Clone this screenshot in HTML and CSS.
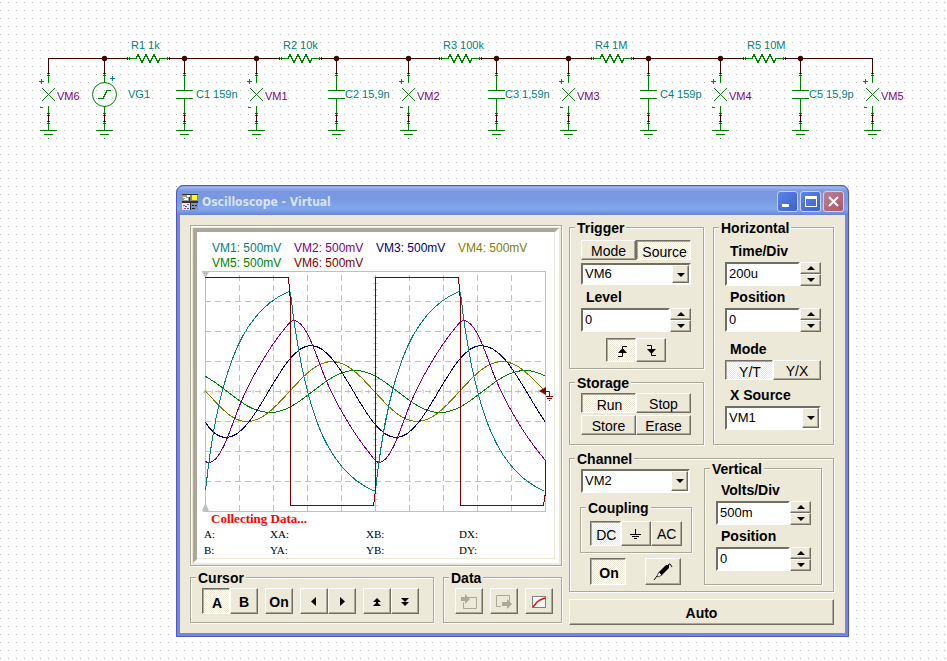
FILE: index.html
```html
<!DOCTYPE html>
<html lang="en">
<head>
    <meta charset="UTF-8">
    <meta name="viewport" content="width=device-width, initial-scale=1.0">
    <title>Oscilloscope - Virtual</title>
    <link rel="stylesheet" href="styles.css">
</head>
<body>

    <!-- circuit -->
    <svg class="schematic" width="947" height="185" viewBox="0 0 947 185">
        <defs>
            <g id="pin">
                <rect class="pin" x="-1" y="-1" width="1" height="1"/><rect class="pin" x="1" y="-1" width="1" height="1"/>
                <rect class="pin" x="-1" y="1" width="1" height="1"/><rect class="pin" x="1" y="1" width="1" height="1"/>
            </g>
            <g id="gnd">
                <path class="wire" d="M.5 114v8"/>
                <path class="part" d="M.5 122v8M-8 130.5h17M-4 134.5h9M0 138.5h1"/>
                <use href="#pin" y="114"/><use href="#pin" y="122"/>
            </g>
            <g id="meter">
                <path class="wire" d="M.5 58v16"/>
                <path class="part" d="M.5 74v9M.5 106v8M-6 88l13 13M7 88l-13 13"/>
                <path class="mark" d="M-9 81.5h5M-6.500 79v5M-8 107.500h3"/>
                <use href="#pin" y="74"/><use href="#gnd"/>
            </g>
            <g id="cap">
                <path class="wire" d="M.5 58v16"/>
                <path class="part" d="M.5 74v16M-8 90.500h17M-8 98.500h17M.5 98v16"/>
                <use href="#pin" y="74"/><use href="#gnd"/>
            </g>
            <g id="res">
                <path class="blank" d="M0 58.500h40"/>
                <path class="part" d="M0 58.500h8l2 -4l4 8l4 -8l4 8l4 -8l4 8l2 -4h8"/>
                <use href="#pin" y="58"/><use href="#pin" x="40" y="58"/>
            </g>
        </defs>

        <path class="wire" d="M48 58.500h825"/>
        <use href="#res" x="128"/><use href="#res" x="280"/><use href="#res" x="440"/>
        <use href="#res" x="592"/><use href="#res" x="744"/>
        <use href="#meter" x="48"/><use href="#meter" x="256"/><use href="#meter" x="408"/>
        <use href="#meter" x="568"/><use href="#meter" x="720"/><use href="#meter" x="872"/>
        <use href="#cap" x="184"/><use href="#cap" x="336"/><use href="#cap" x="496"/>
        <use href="#cap" x="648"/><use href="#cap" x="800"/>

        <path class="wire" d="M104.500 58v16"/>
        <path class="part" d="M104.500 74v9M104.500 106v8M98 98.500h5l4 -8h4"/>
        <circle class="ring" cx="104.500" cy="94.500" r="12"/>
        <path class="mark" d="M110 78.500h5M112.500 76v5"/>
        <use href="#pin" x="104" y="74"/><use href="#gnd" x="104"/>

        <g class="node">
            <circle cx="104.500" cy="58.500" r="2.700"/><circle cx="184.500" cy="58.500" r="2.700"/>
            <circle cx="256.500" cy="58.500" r="2.700"/><circle cx="336.500" cy="58.500" r="2.700"/>
            <circle cx="408.500" cy="58.500" r="2.700"/><circle cx="496.500" cy="58.500" r="2.700"/>
            <circle cx="568.500" cy="58.500" r="2.700"/><circle cx="648.500" cy="58.500" r="2.700"/>
            <circle cx="720.500" cy="58.500" r="2.700"/><circle cx="800.500" cy="58.500" r="2.700"/>
        </g>

        <g class="value">
            <text x="131" y="49">R1 1k</text>
            <text x="283" y="49">R2 10k</text>
            <text x="443" y="49">R3 100k</text>
            <text x="595" y="49">R4 1M</text>
            <text x="747" y="49">R5 10M</text>
            <text x="128" y="98">VG1</text>
            <text x="196" y="98">C1 159n</text>
            <text x="345" y="98">C2 15,9n</text>
            <text x="505" y="98">C3 1,59n</text>
            <text x="660" y="98">C4 159p</text>
            <text x="809" y="98">C5 15,9p</text>
        </g>
        <g class="meter-name">
            <text x="57" y="100">VM6</text>
            <text x="265" y="100">VM1</text>
            <text x="417" y="100">VM2</text>
            <text x="577" y="100">VM3</text>
            <text x="729" y="100">VM4</text>
            <text x="881" y="100">VM5</text>
        </g>
    </svg>

    <div class="window">
        <div class="titlebar">
            <svg class="app-icon" width="16" height="16" viewBox="0 0 16 16" shape-rendering="crispEdges">
                <rect width="16" height="16" fill="#333"/>
                <rect x="0" y="1" width="7" height="6" fill="#9a9a90"/>
                <path d="M1 3h2v1h2v1h-3M5 1h2v1h-2" stroke="#fff" fill="none"/>
                <rect x="8" y="1" width="8" height="6" fill="#888"/>
                <rect x="10" y="1" width="5" height="5" fill="#ff0"/>
                <rect x="0" y="9" width="8" height="7" fill="#f0e4f8"/>
                <path d="M1 11.500h2M5 10.500h2M2 14.500h2" stroke="#c040c0" fill="none"/>
                <path d="M3 12.500h2M5 14.500h2" stroke="#2060c0" fill="none"/>
                <rect x="9" y="9" width="7" height="7" fill="#8090b0"/>
                <path d="M10 11.500h2M13 11.500h2M10 14.500h3" stroke="#223" fill="none"/>
            </svg>
            <h1>Oscilloscope - Virtual</h1>
            <button class="caption" aria-label="Minimize">
                <svg width="19" height="19" viewBox="0 0 19 19"><path d="M4 12h7v3h-7z" fill="#fff"/></svg>
            </button>
            <button class="caption" aria-label="Maximize">
                <svg width="19" height="19" viewBox="0 0 19 19"><path d="M4 4h12v11h-12zM5 7v7h10v-7z" fill="#fff" fill-rule="evenodd"/></svg>
            </button>
            <button class="caption close" aria-label="Close">
                <svg width="19" height="19" viewBox="0 0 19 19"><path d="M5 5l9 9M14 5l-9 9" stroke="#fff" stroke-width="2"/></svg>
            </button>
        </div>

        <div class="client">
            <div class="left">
                <div class="screen">
                    <div class="display">
                        <div class="channels">
                            <span class="vm1">VM1: 500mV</span>
                            <span class="vm2">VM2: 500mV</span>
                            <span class="vm3">VM3: 500mV</span>
                            <span class="vm4">VM4: 500mV</span>
                            <span class="vm5">VM5: 500mV</span>
                            <span class="vm6">VM6: 500mV</span>
                        </div>
                        <svg class="plot" viewBox="197 271 358 241">
                            <path class="grid" d="M239.500 275v236M273.500 275v236M307.500 275v236M341.500 275v236M409.500 275v236M443.500 275v236M477.500 275v236M511.500 275v236"/>
                            <path class="grid" d="M205 301.500h340M205 331.500h340M205 361.500h340M205 391.500h340M205 421.500h340M205 451.500h340M205 481.500h340"/>
                            <path class="ticks" d="M205 391.500h340" stroke-dasharray="1 5.800"/>
                            <path class="ticks" d="M375.500 277v234" stroke-dasharray="1 5"/>
                            <path class="edge" d="M202 271.500h343.500v240h-343M205.500 271v240M375.500 275v236"/>
                            <path class="flag" d="M202 272h7l-3 5h-1zM202 511l3 -7h1l3 7zM203 393l2 -4h1l2 4z"/>

                            <path class="trace vm5" d="M205.500 376.500C229 389 245 412.500 270 412.500C301 412.500 324 370.500 355 370.500S409 412.500 440 412.500S494 370.500 525 370.500Q535 370.500 545 376"/>
                            <path class="trace vm4" d="M205.500 391.500C221 407 231 421.500 247 421.500C278 421.500 301 361.500 332 361.500S386 421.500 417 421.500S471 361.500 502 361.500C518 361.500 531 377 545 391"/>
                            <path class="trace vm3" d="M205.500 422.500Q215 437.500 226 437.500C257 437.500 280 345.500 311 345.500S365 437.500 396 437.500S450 345.500 481 345.500C506 345.500 523 390 545 421.500"/>
                            <path class="trace vm2" d="M205.500 461.500Q207 462.500 209 462.500C219 462 227 440 237 412C248 383 267 350 286 327C289 323 291 320.500 294 320.500C304 321 312 342 322 370C333 399 352 432 371 455C374 459 376 462.500 379 462.500C389 462 397 440 407 412C418 383 437 350 456 327C459 323 461 320.500 464 320.500C474 321 482 342 492 370C503 399 522 432 541 455L545 460"/>
                            <path class="trace vm1" d="M205.500 490.500C211 440 218 398 232 360C246 322 266 301 289 291.500L290.500 293C296 342 303 384 317 422C331 460 351 481 374 491L375.500 490C381 440 388 398 402 360C416 322 436 301 459 291.500L460.500 293C466 342 473 384 487 422C501 460 521 481 544 491"/>
                            <path class="trace vm6" d="M205 277.500h83.500l2 25v203h83l2 -15v-213h83l2 25v203h83l1.500 -10v-36"/>

                            <path class="marker-fill" d="M539 391l7 -4v8z"/>
                            <path class="marker" d="M545 391.500h4.500v5M546 396.500h7M547 398.500h5M549 400.500h1"/>
                        </svg>
                        <p class="status">Collecting Data...</p>
                        <div class="readout">
                            <span>A:</span><span>XA:</span><span>XB:</span><span>DX:</span>
                            <span>B:</span><span>YA:</span><span>YB:</span><span>DY:</span>
                        </div>
                    </div>
                </div>

                <div class="bottom-row">
                    <fieldset class="cursor">
                        <legend>Cursor</legend>
                        <div class="tools">
                            <button class="btn bold pressed">A</button>
                            <button class="btn bold">B</button>
                        </div>
                        <div class="tools">
                            <button class="btn bold">On</button>
                        </div>
                        <div class="tools">
                            <button class="btn" aria-label="Left"><svg width="10" height="11"><path d="M7 1v9l-5 -4.500z"/></svg></button>
                            <button class="btn" aria-label="Right"><svg width="10" height="11"><path d="M3 1v9l5 -4.500z"/></svg></button>
                        </div>
                        <div class="tools">
                            <button class="btn" aria-label="Up"><svg width="10" height="10"><path d="M1 5l4 -4l4 4zM4 4h2v5h-2zM1 9l4 -4l4 4z"/></svg></button>
                            <button class="btn" aria-label="Down"><svg width="10" height="10"><path d="M1 1h8l-4 4zM1 5h8l-4 4z"/></svg></button>
                        </div>
                    </fieldset>
                    <fieldset class="data">
                        <legend>Data</legend>
                        <button class="btn" aria-label="Import data">
                            <svg width="18" height="16" viewBox="0 0 18 16"><path d="M3 3.500h13.500v11h-13v-6" fill="none" stroke="#aca899"/><path d="M1 3h4v-3l5 5l-5 5v-3h-4z" fill="#aca899"/></svg>
                        </button>
                        <button class="btn" aria-label="Export data">
                            <svg width="18" height="16" viewBox="0 0 18 16"><path d="M6 12.500h-4.500v-11h13v6" fill="none" stroke="#aca899"/><path d="M7 8h5v-3l5 5l-5 5v-3h-5z" fill="#aca899"/></svg>
                        </button>
                        <button class="btn" aria-label="Show curves">
                            <svg width="16" height="14" viewBox="0 0 16 14"><rect x="1.500" y="1.500" width="13" height="11" fill="#fff" stroke="#808080"/><path d="M2 12l4 -5l3 -2l5 -2" fill="none" stroke="red" stroke-width="1.500"/></svg>
                        </button>
                    </fieldset>
                </div>
            </div>

            <div class="right">
                <div class="top-panels">
                    <div class="stack">
                        <fieldset class="trigger">
                            <legend>Trigger</legend>
                            <div class="pair">
                                <button class="btn">Mode</button>
                                <button class="btn pressed">Source</button>
                            </div>
                            <div class="combo">
                                <select aria-label="Trigger source"><option>VM6</option></select>
                                <i></i>
                            </div>
                            <label for="level">Level</label>
                            <div class="spin">
                                <input type="text" id="level" value="0">
                                <button class="up" aria-label="Increase"></button>
                                <button class="down" aria-label="Decrease"></button>
                            </div>
                            <div class="slope">
                                <button class="btn pressed" aria-label="Rising edge">
                                    <svg width="11" height="13" viewBox="0 0 11 13"><path d="M1 11.500h4.500v-10h4.500" fill="none" stroke="#000"/><path d="M1 8l4.500 -5l4.500 5z"/></svg>
                                </button>
                                <button class="btn" aria-label="Falling edge">
                                    <svg width="11" height="13" viewBox="0 0 11 13"><path d="M1 1.500h4.500v10h4.500" fill="none" stroke="#000"/><path d="M1 5l4.500 5l4.500 -5z"/></svg>
                                </button>
                            </div>
                        </fieldset>

                        <fieldset class="storage">
                            <legend>Storage</legend>
                            <button class="btn pressed">Run</button>
                            <button class="btn">Stop</button>
                            <button class="btn">Store</button>
                            <button class="btn">Erase</button>
                        </fieldset>
                    </div>

                    <fieldset class="horizontal">
                        <legend>Horizontal</legend>
                        <label for="timediv">Time/Div</label>
                        <div class="spin">
                            <input type="text" id="timediv" value="200u">
                            <button class="up" aria-label="Increase"></button>
                            <button class="down" aria-label="Decrease"></button>
                        </div>
                        <label for="hpos">Position</label>
                        <div class="spin">
                            <input type="text" id="hpos" value="0">
                            <button class="up" aria-label="Increase"></button>
                            <button class="down" aria-label="Decrease"></button>
                        </div>
                        <div class="label mode">Mode</div>
                        <div class="pair">
                            <button class="btn pressed">Y/T</button>
                            <button class="btn">Y/X</button>
                        </div>
                        <label class="source" for="xsource">X Source</label>
                        <div class="combo tall">
                            <select id="xsource"><option>VM1</option></select>
                            <i></i>
                        </div>
                    </fieldset>
                </div>

                <fieldset class="channel">
                    <legend>Channel</legend>
                    <div class="channel-body">
                        <div>
                            <div class="combo tall">
                                <select aria-label="Channel"><option>VM2</option></select>
                                <i></i>
                            </div>
                            <fieldset class="coupling">
                                <legend>Coupling</legend>
                                <button class="btn pressed">DC</button>
                                <button class="btn" aria-label="Ground">
                                    <svg width="13" height="11" viewBox="0 0 13 11"><path d="M6.500 0v5M1 5.500h11M3 7.500h7M5 9.500h3" fill="none" stroke="#000"/></svg>
                                </button>
                                <button class="btn">AC</button>
                            </fieldset>
                            <div class="channel-tools">
                                <button class="btn bold pressed">On</button>
                                <button class="btn" aria-label="Probe">
                                    <svg width="20" height="18" viewBox="0 0 20 18">
                                        <path d="M1 17l3 -4" stroke="#000"/>
                                        <path d="M4 13l2 -4l3 3l-4 2z" fill="#fff" stroke="#444"/>
                                        <path d="M6 9l7 -7l3 0l0 3l-7 7z"/>
                                        <path d="M15 3q1 -3 2 -2l2 3" fill="none" stroke="#000"/>
                                    </svg>
                                </button>
                            </div>
                        </div>
                        <fieldset class="vertical">
                            <legend>Vertical</legend>
                            <label for="voltsdiv">Volts/Div</label>
                            <div class="spin">
                                <input type="text" id="voltsdiv" value="500m">
                                <button class="up" aria-label="Increase"></button>
                                <button class="down" aria-label="Decrease"></button>
                            </div>
                            <label for="vpos">Position</label>
                            <div class="spin">
                                <input type="text" id="vpos" value="0">
                                <button class="up" aria-label="Increase"></button>
                                <button class="down" aria-label="Decrease"></button>
                            </div>
                        </fieldset>
                    </div>
                </fieldset>

                <button class="btn bold auto">Auto</button>
            </div>
        </div>
    </div>

</body>
</html>
```
FILE: styles.css
```css
* {
    box-sizing: border-box;
}
body {
    margin: 0;
    min-height: 100vh;
    font-family: "Liberation Sans", Arial, sans-serif;
    font-size: 14px;
    line-height: 16px;
    color: #000;
    background: #fff conic-gradient(at 1px 1px, transparent 75%, #b8b8b8 0) 0 2px / 8px 8px;
}

/* circuit */
.schematic {
    display: block;
    font-size: 11px;
}
.schematic path {
    fill: none;
    shape-rendering: crispEdges;
}
.wire { stroke: #400000; }
.part { stroke: #008000; }
.mark { stroke: #008080; }
.blank { stroke: #fff; }
.pin { fill: #f00; }
.ring {
    fill: none;
    stroke: #008000;
}
.node { fill: #400000; }
.value { fill: #008080; }
.meter-name { fill: #800080; }

/* window */
.window {
    margin: 0 98px 0 176px;
    border: 4px solid #7586dc;
    border-top: 0;
    border-radius: 8px 8px 0 0;
    background: #ece9d8;
    outline: 1px solid #5058c0;
    outline-offset: -1px;
}
.titlebar {
    display: flex;
    align-items: center;
    gap: 2px;
    height: 30px;
    margin: 0 -4px;
    padding: 3px 5px 0 6px;
    border-radius: 7px 7px 0 0;
    background: linear-gradient(#5a78d0 0, #9db9ee 2px, #7b97e0 6px, #7a98e2 14px, #82a8ec 24px, #7590dc 28px, #6c80d0 30px);
}
.titlebar h1 {
    flex: 1;
    margin: 0 0 0 2px;
    font: bold 12px/16px "DejaVu Sans Condensed", "DejaVu Sans", sans-serif;
    color: #d8e4f8;
}
.caption {
    width: 21px;
    height: 21px;
    padding: 0;
    border: 1px solid #c8d4f4;
    border-radius: 3px;
    background: linear-gradient(135deg, #5c84e4, #3c62d0);
}
.caption svg {
    display: block;
}
.caption.close {
    background: linear-gradient(135deg, #c08090, #a85868);
}
.client {
    display: grid;
    grid-template-columns: 1fr 265px;
    gap: 7px;
    padding: 4px 11px 8px 10px;
}

/* groups */
fieldset {
    min-width: 0;
    margin: 0;
    padding: 0 12px 0 11px;
    border: 1px solid #aca899;
    box-shadow: 1px 1px 0 #fff, inset 1px 1px 0 #fff;
}
legend {
    margin-left: -6px;
    padding: 3px 2px 0;
    font-weight: bold;
    line-height: 13px;
    background: #ece9d8;
}
label, .label {
    display: block;
    margin: 3px 0;
    padding-left: 5px;
    font-weight: bold;
}

/* controls */
.btn {
    display: flex;
    align-items: center;
    justify-content: center;
    height: 20px;
    padding: 1px 0 0;
    font: 14px/16px "Liberation Sans", Arial, sans-serif;
    color: #000;
    border: 1px solid;
    border-color: #fff #716f64 #716f64 #fff;
    background: #ece9d8;
    box-shadow: inset -1px -1px 0 #aca899;
}
.btn.bold {
    font-weight: bold;
}
.btn.pressed {
    padding: 3px 0 0 2px;
    border-color: #716f64 #fff #fff #716f64;
    background: repeating-conic-gradient(#fff 0 25%, #ece9d8 0 50%) 0 0 / 2px 2px;
    box-shadow: inset 1px 1px 0 #aca899;
}
.combo {
    position: relative;
    height: 22px;
}
.combo.tall {
    height: 24px;
}
.combo select {
    width: 100%;
    height: 100%;
    padding: 0 20px 0 2px;
    appearance: none;
    font: 13px/16px "Liberation Sans", Arial, sans-serif;
    color: #000;
    border: 2px solid;
    border-color: #716f64 #fff #fff #716f64;
    border-radius: 0;
    background: #fff;
}
.combo i {
    position: absolute;
    top: 2px;
    right: 2px;
    bottom: 2px;
    width: 17px;
    border: 1px solid;
    border-color: #fff #716f64 #716f64 #fff;
    background: #ece9d8;
    box-shadow: inset -1px -1px 0 #aca899;
    pointer-events: none;
}
.combo i::after,
.spin button::after {
    content: "";
    display: block;
    width: 0;
    margin: 0 auto;
    border: 4px solid transparent;
    border-bottom: 0;
    border-top-color: #000;
}
.combo i::after {
    margin-top: 7px;
}
.spin {
    display: grid;
    grid-template-columns: 1fr 21px;
    grid-template-rows: 12px 12px;
}
.spin input {
    grid-row: 1 / 3;
    min-width: 0;
    padding: 0 2px;
    font: 13px/16px "Liberation Sans", Arial, sans-serif;
    color: #000;
    border: 2px solid;
    border-color: #716f64 #fff #fff #716f64;
    border-radius: 0;
    background: #fff;
}
.spin button {
    padding: 0;
    border: 1px solid;
    border-color: #fff #716f64 #716f64 #fff;
    background: #ece9d8;
    box-shadow: inset -1px -1px 0 #aca899;
}
.spin .up::after {
    border-top: 0;
    border-bottom: 4px solid #000;
}

/* left side */
.left {
    margin-top: 6px;
}
.screen {
    padding: 2px;
    border: 1px solid #aca899;
    box-shadow: 1px 1px 0 #fff, inset 1px 1px 0 #fff;
}
.display {
    padding-top: 9px;
    border: 4px solid;
    border-color: #aca899 #fff #fff #aca899;
    background: #fff;
    box-shadow: inset -1px -1px 0 #ece9d8;
}
.channels {
    display: grid;
    grid-template-columns: repeat(4, 82px);
    padding-left: 15px;
    font-size: 12px;
    line-height: 15px;
}
.vm1 { color: #008080; }
.vm2 { color: #800080; }
.vm3 { color: #000080; }
.vm4 { color: #808000; }
.vm5 { color: #008000; }
.vm6 { color: #800000; }
.plot {
    display: block;
    width: 100%;
}
.plot path {
    fill: none;
}
.plot .grid {
    stroke: #c0c0c0;
    stroke-dasharray: 6 4;
    shape-rendering: crispEdges;
}
.plot .ticks {
    stroke: #c0c0c0;
    stroke-width: 4;
}
.plot .edge {
    stroke: #c0c0c0;
    shape-rendering: crispEdges;
}
.plot .flag { fill: #c0c0c0; }
.plot .trace {
    stroke: currentColor;
    shape-rendering: crispEdges;
}
.plot .marker { stroke: #800000; }
.plot .marker-fill { fill: #800000; }
.status {
    margin: 0;
    padding-left: 14px;
    font: bold 13px/14px "Liberation Serif", "Times New Roman", serif;
    color: #f00;
}
.readout {
    display: grid;
    grid-template-columns: 66px 96px 93px 1fr;
    padding: 0 0 1px 7px;
    font: 11px/16px "Liberation Serif", "Times New Roman", serif;
}
.bottom-row {
    display: grid;
    grid-template-columns: 1fr 119px;
    gap: 9px;
    margin-top: 3px;
}
.cursor, .data {
    display: flex;
    gap: 7px;
    padding: 3px 11px 8px;
}
.data {
    padding-right: 0;
}
.tools {
    display: flex;
}
.cursor .btn, .data .btn {
    width: 28px;
    height: 26px;
}

/* right side */
.right {
    display: flex;
    flex-direction: column;
}
.top-panels {
    display: grid;
    grid-template-columns: 135px 1fr;
    gap: 9px;
    margin-bottom: 5px;
}
.pair {
    display: grid;
    grid-template-columns: 1fr 1fr;
}
.trigger {
    padding-top: 5px;
    padding-bottom: 6px;
}
.trigger .pair {
    margin-bottom: 3px;
}
.trigger label {
    margin-top: 4px;
}
.slope {
    display: flex;
    justify-content: center;
    margin-top: 6px;
}
.slope .btn {
    width: 30px;
    height: 24px;
}
.storage {
    display: grid;
    grid-template-columns: 1fr 1fr;
    row-gap: 2px;
    margin-top: 5px;
    padding-top: 3px;
    padding-bottom: 9px;
}
.horizontal {
    padding-top: 5px;
}
.horizontal .mode {
    margin-top: 9px;
}
.horizontal .source {
    margin-top: 7px;
}
.channel {
    padding: 0 11px 0 10px;
}
.channel > legend {
    margin-left: -5px;
}
.channel-body {
    display: grid;
    grid-template-columns: 112px 1fr;
    gap: 12px;
    padding: 3px 0 6px;
}
.channel-body .tall {
    margin: 0 2px 0 1px;
}
.coupling {
    display: grid;
    grid-template-columns: repeat(3, 1fr);
    margin-top: 6px;
    padding: 6px 9px 6px;
}
.coupling > legend {
    margin-left: -4px;
}
.coupling .btn {
    height: 25px;
}
.channel-tools {
    display: flex;
    justify-content: space-between;
    margin-top: 5px;
    padding: 0 11px 0 10px;
}
.channel-tools .btn {
    width: 36px;
    height: 27px;
}
.vertical {
    margin-top: -9px;
    padding: 3px 10px 0 11px;
}
.auto {
    height: 26px;
    margin-top: 7px;
}
```
